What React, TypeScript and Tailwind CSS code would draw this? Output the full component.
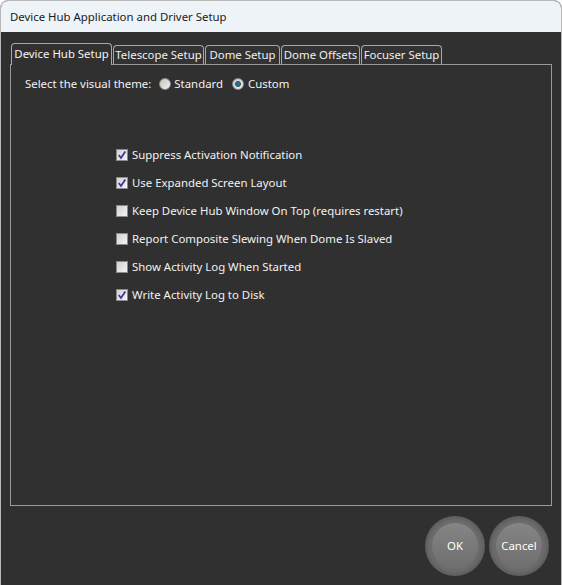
import React from "react";

const font = { fontFamily: '"Noto Sans", "Open Sans", sans-serif' };

function CheckBox({ checked }: { checked: boolean }) {
  return (
    <div className="w-[12px] h-[12px] shrink-0 border border-[#8a8a8a] bg-gradient-to-br from-[#d2d2d2] to-[#f4f4f4] flex items-center justify-center">
      {checked && (
        <svg width="10" height="10" viewBox="0 0 10 10">
          <path d="M1.8 5 L4 8 L8.3 1.5" fill="none" stroke="#3b3b9e" strokeWidth="1.8" />
        </svg>
      )}
    </div>
  );
}

function Radio({ checked }: { checked: boolean }) {
  return (
    <div className="w-[12px] h-[12px] shrink-0 rounded-full border border-[#8a8a8a] bg-gradient-to-br from-[#c4c4c4] to-[#f2f2f2] flex items-center justify-center">
      {checked && <div className="w-[6px] h-[6px] rounded-full bg-[#2f6d97] border border-[#1f4f70]" />}
    </div>
  );
}

const tabs = [
  { label: "Device Hub Setup", w: 101 },
  { label: "Telescope Setup", w: 91 },
  { label: "Dome Setup", w: 75 },
  { label: "Dome Offsets", w: 79 },
  { label: "Focuser Setup", w: 81 },
];

const items = [
  { label: "Suppress Activation Notification", checked: true },
  { label: "Use Expanded Screen Layout", checked: true },
  { label: "Keep Device Hub Window On Top (requires restart)", checked: false },
  { label: "Report Composite Slewing When Dome Is Slaved", checked: false },
  { label: "Show Activity Log When Started", checked: false },
  { label: "Write Activity Log to Disk", checked: true },
];

function RoundButton({ label }: { label: string }) {
  return (
    <div className="w-[60px] h-[60px] rounded-full bg-[radial-gradient(circle,#7a7a7a_0%,#6a6a6a_60%,#4a4a4a_85%,#353535_100%)] flex items-center justify-center">
      <div className="w-[46px] h-[46px] rounded-full bg-gradient-to-b from-[#858585] to-[#6e6e6e] flex items-center justify-center text-[11.4px] text-white">
        {label}
      </div>
    </div>
  );
}

export default function App() {
  return (
    <div
      className="w-[562px] h-[585px] flex flex-col bg-[#303030] rounded-t-[8px] border border-b-0 border-[#b8b8b8] overflow-hidden text-[11.4px] whitespace-nowrap"
      style={font}
    >
      <div className="h-[31px] shrink-0 bg-[#eef3f8] flex items-center pl-[9px] text-[#1a1a1a] text-[11.4px]">
        Device Hub Application and Driver Setup
      </div>
      <div className="flex flex-col px-[9px] pt-[10px]">
        <div className="flex items-end h-[22px] pl-px">
          {tabs.map((t, i) =>
            i === 0 ? (
              <div
                key={t.label}
                style={{ width: t.w }}
                className="h-[22px] relative z-10 -mb-px border border-b-0 border-[#a8a8a8] rounded-t-[4px] bg-[#303030] text-[#f4f4f4] flex items-center justify-center pb-[2px]"
              >
                {t.label}
              </div>
            ) : (
              <div
                key={t.label}
                style={{ width: t.w }}
                className="h-[19px] ml-px border border-b-0 border-[#a8a8a8] rounded-t-[4px] bg-[#333333] text-[#f0f0f0] flex items-center justify-center"
              >
                {t.label}
              </div>
            )
          )}
        </div>
        <div className="h-[442px] w-[542px] border border-[#9a9a9a] flex flex-col text-[#f2f2f2]">
          <div className="flex items-center h-[16px] mt-[11px] pl-[14px]">
            <span>Select the visual theme:</span>
            <div className="ml-[8px] flex items-center gap-[3px]">
              <Radio checked={false} />
              <span>Standard</span>
            </div>
            <div className="ml-[9px] flex items-center gap-[4px]">
              <Radio checked={true} />
              <span>Custom</span>
            </div>
          </div>
          <div className="flex flex-col pl-[105px] mt-[55px] gap-[12px]">
            {items.map((it) => (
              <div key={it.label} className="flex items-center gap-[4px] h-[16px]">
                <CheckBox checked={it.checked} />
                <span>{it.label}</span>
              </div>
            ))}
          </div>
        </div>
      </div>
      <div className="flex justify-end gap-[4px] pr-[12px] mt-[10px]">
        <RoundButton label="OK" />
        <RoundButton label="Cancel" />
      </div>
    </div>
  );
}
